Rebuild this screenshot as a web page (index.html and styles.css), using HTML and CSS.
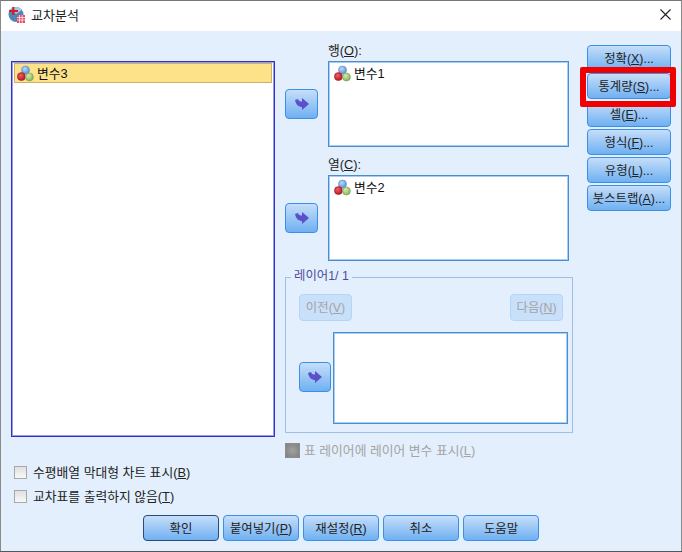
FILE: index.html
```html
<!DOCTYPE html>
<html lang="ko">
<head>
<meta charset="utf-8">
<title>교차분석</title>
<link rel="stylesheet" href="styles.css">
</head>
<body>

<!-- Shared icons -->
<svg class="sprite" width="0" height="0">
  <defs>
    <radialGradient id="ballBlue" cx="40%" cy="35%" r="70%"><stop offset="0" stop-color="#bcd8f8"/><stop offset="1" stop-color="#4f8fd8"/></radialGradient>
    <radialGradient id="ballRed" cx="40%" cy="35%" r="70%"><stop offset="0" stop-color="#f06060"/><stop offset="1" stop-color="#b01020"/></radialGradient>
    <radialGradient id="ballGreen" cx="40%" cy="35%" r="70%"><stop offset="0" stop-color="#d4eab0"/><stop offset="1" stop-color="#7fb050"/></radialGradient>
    <symbol id="varIcon" viewBox="0 0 17 17">
      <circle cx="8.5" cy="5" r="4" fill="url(#ballBlue)" stroke="#5a8cc8" stroke-width=".6"/>
      <circle cx="4.4" cy="11.6" r="4" fill="url(#ballRed)" stroke="#a01828" stroke-width=".6"/>
      <circle cx="12.4" cy="12" r="4" fill="url(#ballGreen)" stroke="#78a050" stroke-width=".6"/>
    </symbol>
    <symbol id="moveIcon" viewBox="0 0 14 12">
      <path d="M0 2 L3 1 C3.5 3 5 3.6 7 3.6 L7 0 L14 6 L7 12 L7 9 C4 9 1 7 0 2Z" fill="#5c50c8"/>
    </symbol>
  </defs>
</svg>

<div class="window">

  <!-- Title bar -->
  <div class="titlebar">
    <svg class="app-icon" viewBox="0 0 17 17" width="17" height="17">
      <circle cx="8" cy="8.5" r="7.5" fill="#4f86b8"/>
      <path d="M3 3 A7.5 7.5 0 0 1 14 4 L8 8 Z" fill="#a8c8e4"/>
      <rect x="1" y="4" width="9" height="2" fill="#d0202c"/>
      <rect x="4.2" y="1" width="2.2" height="8" fill="#d0202c"/>
      <rect x="9" y="9" width="8" height="8" fill="#e0506a"/>
      <path d="M9 11.5H17M9 14H17M11.5 9V17M14.2 9V17" stroke="#fff" stroke-width=".7"/>
    </svg>
    <span class="title">교차분석</span>
    <svg class="close" viewBox="0 0 11 11" width="11" height="11">
      <path d="M.5 .5L10.5 10.5M10.5 .5L.5 10.5" stroke="#222" stroke-width="1.1"/>
    </svg>
  </div>

  <div class="dialog">
    <div class="main">

      <!-- Source variables -->
      <div class="source">
        <div class="list source-list">
          <div class="var selected"><svg class="var-icon"><use href="#varIcon"/></svg>변수3</div>
        </div>
        <label class="check first"><span class="box"></span><span class="check-text">수평배열 막대형 차트 표시(<u>B</u>)</span></label>
        <label class="check"><span class="box"></span><span class="check-text">교차표를 출력하지 않음(<u>T</u>)</span></label>
      </div>

      <!-- Rows, columns, layers -->
      <div class="middle">
        <div class="field-label">행(<u>O</u>):</div>
        <div class="target">
          <button class="arrow"><svg class="move-icon"><use href="#moveIcon"/></svg></button>
          <div class="list target-list">
            <div class="var"><svg class="var-icon"><use href="#varIcon"/></svg>변수1</div>
          </div>
        </div>

        <div class="field-label second">열(<u>C</u>):</div>
        <div class="target">
          <button class="arrow"><svg class="move-icon"><use href="#moveIcon"/></svg></button>
          <div class="list target-list">
            <div class="var"><svg class="var-icon"><use href="#varIcon"/></svg>변수2</div>
          </div>
        </div>

        <div class="layer">
          <span class="legend">레이어1/ 1</span>
          <div class="layer-nav">
            <button class="btn disabled">이전(<u>V</u>)</button>
            <button class="btn disabled">다음(<u>N</u>)</button>
          </div>
          <div class="layer-body">
            <button class="arrow small"><svg class="move-icon"><use href="#moveIcon"/></svg></button>
            <div class="list layer-list"></div>
          </div>
        </div>

        <label class="check muted"><span class="box grey"></span><span class="check-text">표 레이어에 레이어 변수 표시(<u>L</u>)</span></label>
      </div>

      <!-- Side buttons -->
      <div class="side">
        <button class="btn">정확(<u>X</u>)...</button>
        <button class="btn">통계량(<u>S</u>)...</button>
        <button class="btn">셀(<u>E</u>)...</button>
        <button class="btn">형식(<u>F</u>)...</button>
        <button class="btn">유형(<u>L</u>)...</button>
        <button class="btn">붓스트랩(<u>A</u>)...</button>
        <div class="highlight"></div>
      </div>
    </div>

    <!-- Bottom buttons -->
    <div class="actions">
      <button class="btn default">확인</button>
      <button class="btn">붙여넣기(<u>P</u>)</button>
      <button class="btn">재설정(<u>R</u>)</button>
      <button class="btn">취소</button>
      <button class="btn">도움말</button>
    </div>
  </div>
</div>

</body>
</html>
```

FILE: styles.css
```css
html, body {
  margin: 0;
  padding: 0;
  background: #55575a;
  overflow: hidden;
}

body {
  font-family: "Liberation Sans", "Noto Sans CJK KR", sans-serif;
  font-size: 12.8px;
  color: #222;
}

.sprite {
  position: absolute;
}

/* Window */
.window {
  width: 682px;
  height: 551px;
  box-sizing: border-box;
  border-top: 1px solid #777;
  border-left: 1px solid #8a8a8a;
  border-right: 1px solid #8a8a8a;
  background: #e3effc;
}

.titlebar {
  height: 27px;
  background: #fff;
  display: flex;
  align-items: center;
  padding: 0 10px 3px 7px;
}

.app-icon {
  margin-right: 6px;
}

.title {
  font-size: 13px;
  color: #222;
}

.close {
  margin-left: auto;
}

.dialog {
  height: 520px;
}

.main {
  display: flex;
  align-items: flex-start;
  padding-left: 10px;
}

/* Lists */
.list {
  box-sizing: border-box;
  background: #fff;
  border: 1px solid #4a8ed2;
  box-shadow: inset 0 0 0 1px #a9cdee;
}

.var {
  display: flex;
  align-items: center;
  height: 20px;
  line-height: 19px;
  padding-left: 2px;
  color: #111;
}

.var-icon {
  width: 17px;
  height: 17px;
  margin-right: 3px;
}

.selected {
  background: #fde28a;
  border: 1px solid #c8b468;
  box-sizing: border-box;
  margin: 1px 2px;
}

/* Left column */
.source {
  width: 264px;
  padding-top: 30px;
}

.source-list {
  height: 376px;
  border-color: #3030cc;
  box-shadow: inset 0 0 0 1px #9a9ae8;
}

.check {
  display: flex;
  align-items: center;
  height: 14px;
  margin: 10px 0 0 3px;
}

.check.first {
  margin-top: 28px;
}

.check-text {
  padding-bottom: 2px;
}

.box {
  width: 11px;
  height: 11px;
  margin-right: 6px;
  border: 1px solid #a8a8a8;
  background: linear-gradient(#e0e0e0, #f8f8f8);
}

/* Middle column */
.middle {
  width: 288px;
  margin-left: 10px;
  padding-top: 13px;
}

.field-label {
  height: 17px;
  line-height: 14px;
  padding-left: 43px;
}

.field-label.second {
  margin-top: 11px;
}

.target {
  display: flex;
  align-items: flex-start;
}

.target-list {
  width: 241px;
  height: 86px;
  padding-top: 1px;
  padding-left: 3px;
}

.arrow {
  flex: none;
  width: 33px;
  height: 30px;
  margin: 28px 10px 0 0;
  padding: 0;
  display: flex;
  align-items: center;
  justify-content: center;
  border: 1px solid #3a90e8;
  border-radius: 4px;
  background: linear-gradient(#c6def9, #6fb0f2);
}

.move-icon {
  width: 14px;
  height: 12px;
}

.arrow.small {
  width: 32px;
  margin: 30px 2px 0 0;
}

.btn {
  font: inherit;
  font-size: 12.4px;
  color: #222;
  height: 26px;
  padding: 0 0 1px;
  border: 1px solid #3a90e8;
  border-radius: 4px;
  background: linear-gradient(#c6def9, #6fb0f2);
  white-space: nowrap;
}

/* Layer group */
.layer {
  position: relative;
  box-sizing: border-box;
  height: 156px;
  margin-top: 16px;
  padding: 16px 4px 0 13px;
  border: 1px solid #9cc0e6;
}

.legend {
  position: absolute;
  left: 5px;
  top: -9px;
  padding: 0 3px;
  line-height: 15px;
  background: #e3effc;
  font-size: 12.4px;
  color: #4c4c9c;
}

.layer-nav {
  display: flex;
  justify-content: space-between;
  padding-right: 5px;
}

.btn.disabled {
  width: 53px;
  height: 27px;
  color: #a4a4a4;
  border-color: #b4d6f6;
  background: #c8e0f9;
}

.layer-body {
  display: flex;
  align-items: flex-start;
  margin-top: 11px;
}

.layer-list {
  flex: none;
  width: 235px;
  height: 92px;
}

.check.muted {
  margin: 10px 0 0 0;
  height: 15px;
  color: #a4a4a4;
}

.box.grey {
  width: 13px;
  height: 13px;
  margin-right: 4px;
  border-color: #8c8c8c;
  background: radial-gradient(#a0a0a0, #808080);
}

/* Right column */
.side {
  position: relative;
  width: 84px;
  margin: 14px 0 0 14px;
  display: flex;
  flex-direction: column;
  gap: 2px;
}

.highlight {
  position: absolute;
  left: -7px;
  top: 22px;
  width: 84px;
  height: 28px;
  border: 6px solid #f00000;
  border-radius: 2px;
}

/* Bottom row */
.actions {
  display: flex;
  gap: 4px;
  margin-top: 12px;
  padding-left: 142px;
}

.actions .btn {
  width: 76px;
}

.btn.default {
  border-color: #2a4a78;
}
```
